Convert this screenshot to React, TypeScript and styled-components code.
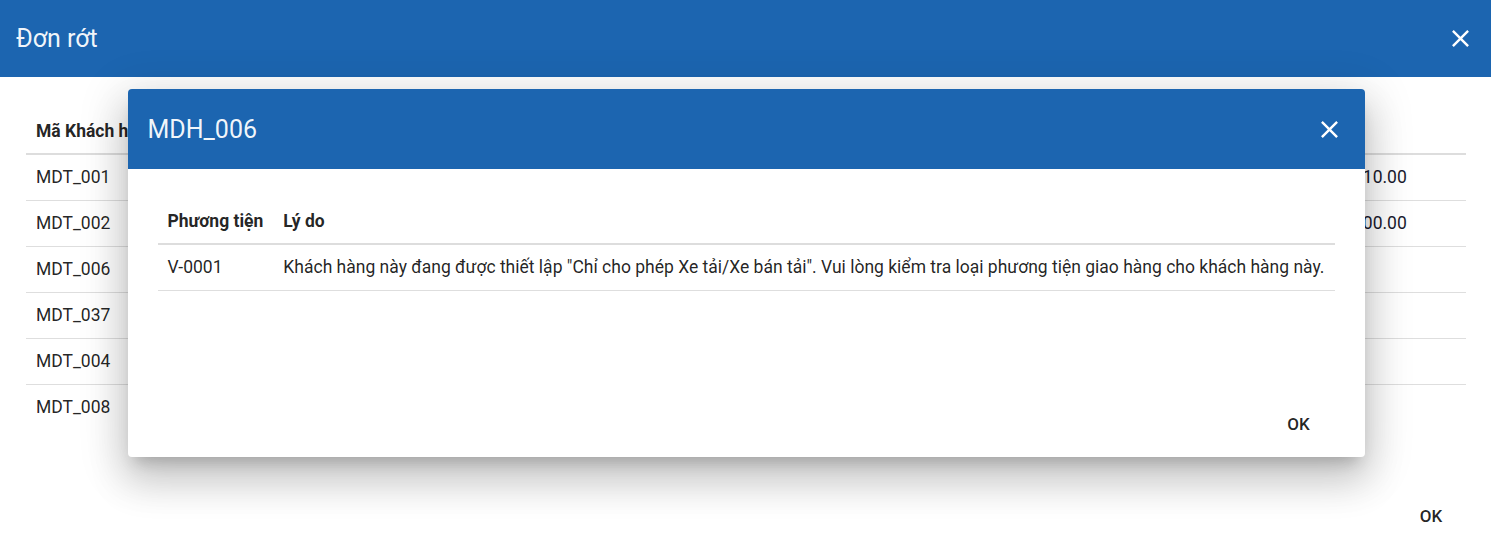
import React from "react";
import styled, { createGlobalStyle } from "styled-components";

const GlobalStyle = createGlobalStyle`
  html, body {
    margin: 0;
    padding: 0;
    background: #ffffff;
    font-family: Roboto, "Liberation Sans", Arial, sans-serif;
    color: rgba(0, 0, 0, 0.87);
  }
  * {
    box-sizing: border-box;
  }
`;

const BLUE = "#1c65b0";

interface Customer {
  id: string;
  amount: string;
}

const customers: Customer[] = [
  { id: "MDT_001", amount: "110.00" },
  { id: "MDT_002", amount: "100.00" },
  { id: "MDT_006", amount: "0" },
  { id: "MDT_037", amount: "0" },
  { id: "MDT_004", amount: "0" },
  { id: "MDT_008", amount: "0" },
];

const Page = styled.div`
  position: relative;
  width: 100%;
  height: 542px;
  overflow: hidden;
  background: #fff;
`;

const FullDialog = styled.div`
  display: flex;
  flex-direction: column;
  height: 100%;
`;

const TopBar = styled.header<{ $height: number; $padX: number }>`
  display: flex;
  align-items: center;
  justify-content: space-between;
  height: ${(p) => p.$height}px;
  flex: none;
  padding: 0 ${(p) => p.$padX}px;
  background: ${BLUE};
  color: rgba(255, 255, 255, 0.95);
`;

const Title = styled.h2`
  margin: 0;
  font-size: 25px;
  font-weight: 400;
  line-height: 1;
  letter-spacing: 0;
`;

const CloseButton = styled.button`
  display: flex;
  align-items: center;
  justify-content: center;
  width: 30px;
  height: 30px;
  padding: 0;
  border: none;
  background: transparent;
  color: #fff;
  cursor: pointer;
`;

const Content = styled.div<{ $pad: string }>`
  flex: 1;
  padding: ${(p) => p.$pad};
`;

const Table = styled.table`
  width: 100%;
  border-collapse: collapse;
  font-size: 17.5px;
`;

const HeadCell = styled.th<{ $width?: string }>`
  height: 46px;
  padding: 0 10px;
  text-align: left;
  font-weight: 700;
  white-space: nowrap;
  border-bottom: 2px solid #dddddd;
  width: ${(p) => p.$width ?? "auto"};
`;

const Row = styled.tr<{ $last?: boolean }>`
  & > td {
    border-bottom: 1px solid ${(p) => (p.$last ? "transparent" : "#dedede")};
  }
`;

const Cell = styled.td`
  height: 46px;
  padding: 0 10px;
  text-align: left;
  white-space: nowrap;
`;

const AmountCell = styled.td`
  height: 46px;
  padding: 0;
  white-space: nowrap;
  color: #1a1a2e;
`;

const Actions = styled.div<{ $padRight: number; $padBottom: number }>`
  display: flex;
  justify-content: flex-end;
  padding: 0 ${(p) => p.$padRight}px ${(p) => p.$padBottom}px 0;
`;

const OkButton = styled.button`
  min-width: 64px;
  height: 36px;
  padding: 6px 8px;
  border: none;
  background: transparent;
  font-family: Roboto, "Liberation Sans", Arial, sans-serif;
  font-size: 17px;
  font-weight: 500;
  color: rgba(0, 0, 0, 0.87);
  cursor: pointer;
`;

const Overlay = styled.div`
  position: absolute;
  inset: 0;
  display: flex;
  align-items: center;
  justify-content: center;
`;

const Modal = styled.div`
  display: flex;
  flex-direction: column;
  width: 1237px;
  height: 368px;
  margin-top: 4px;
  margin-left: 1px;
  border-radius: 4px;
  overflow: hidden;
  background: #fff;
  box-shadow: 0px 11px 15px -7px rgba(0, 0, 0, 0.2),
    0px 24px 38px 3px rgba(0, 0, 0, 0.14),
    0px 9px 46px 8px rgba(0, 0, 0, 0.12);
`;

const CloseIcon: React.FC = () => (
  <svg width="29" height="29" viewBox="0 0 24 24" fill="currentColor">
    <path d="M19 6.41 17.59 5 12 10.59 6.41 5 5 6.41 10.59 12 5 17.59 6.41 19 12 13.41 17.59 19 19 17.59 13.41 12z" />
  </svg>
);

const App: React.FC = () => {
  return (
    <>
      <GlobalStyle />
      <Page>
        <FullDialog>
          <TopBar $height={77} $padX={16}>
            <Title>Đơn rớt</Title>
            <CloseButton aria-label="close">
              <CloseIcon />
            </CloseButton>
          </TopBar>
          <Content $pad="31px 25px 0 26px">
            <Table>
              <thead>
                <tr>
                  <HeadCell $width="1%">Mã Khách hàng</HeadCell>
                  <HeadCell>Tên Khách hàng</HeadCell>
                  <HeadCell $width="113px" />
                </tr>
              </thead>
              <tbody>
                {customers.map((c, i) => (
                  <Row key={c.id} $last={i === customers.length - 1}>
                    <Cell>{c.id}</Cell>
                    <Cell />
                    <AmountCell>{c.amount}</AmountCell>
                  </Row>
                ))}
              </tbody>
            </Table>
          </Content>
          <Actions $padRight={28} $padBottom={8}>
            <OkButton>OK</OkButton>
          </Actions>
        </FullDialog>

        <Overlay>
          <Modal>
            <TopBar $height={80} $padX={20}>
              <Title>MDH_006</Title>
              <CloseButton aria-label="close">
                <CloseIcon />
              </CloseButton>
            </TopBar>
            <Content $pad="29px 30px 0 30px">
              <Table>
                <thead>
                  <tr>
                    <HeadCell $width="1%">Phương tiện</HeadCell>
                    <HeadCell>Lý do</HeadCell>
                  </tr>
                </thead>
                <tbody>
                  <Row>
                    <Cell>V-0001</Cell>
                    <Cell>
                      Khách hàng này đang được thiết lập "Chỉ cho phép Xe tải/Xe
                      bán tải". Vui lòng kiểm tra loại phương tiện giao hàng cho
                      khách hàng này.
                    </Cell>
                  </Row>
                </tbody>
              </Table>
            </Content>
            <Actions $padRight={34} $padBottom={15}>
              <OkButton>OK</OkButton>
            </Actions>
          </Modal>
        </Overlay>
      </Page>
    </>
  );
};

export default App;
